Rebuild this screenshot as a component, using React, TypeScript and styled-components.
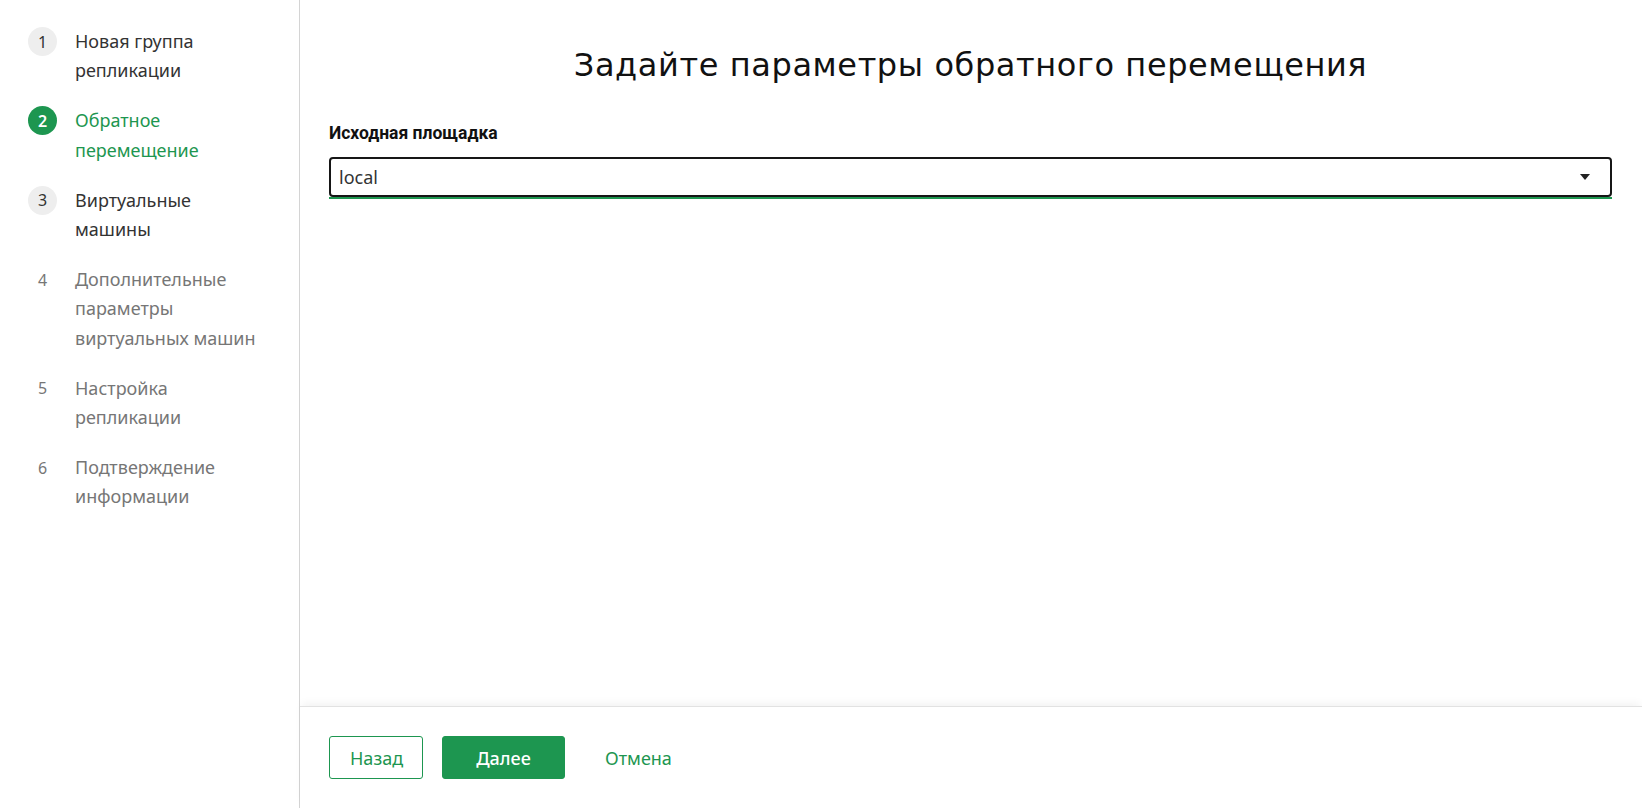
import React from 'react';
import styled, { createGlobalStyle } from 'styled-components';

const GREEN = '#1d9650';

const GlobalStyle = createGlobalStyle`
  html, body {
    margin: 0;
    padding: 0;
    background: #ffffff;
    font-family: "Noto Sans", "Open Sans", sans-serif;
  }
  * {
    box-sizing: border-box;
  }
`;

// Layout
const Page = styled.div`
  display: flex;
  width: 100%;
  height: 100vh;
  overflow: hidden;
`;

const Sidebar = styled.nav`
  width: 300px;
  flex-shrink: 0;
  border-right: 1px solid #d4d4d4;
  padding: 27px 20px 0 28px;
  display: flex;
  flex-direction: column;
  gap: 21px;
`;

const Step = styled.div<{ $state: 'done' | 'active' | 'todo' }>`
  display: flex;
  align-items: flex-start;
  gap: 18px;
  font-size: 18px;
  line-height: 29.2px;
  color: ${(p) => (p.$state === 'active' ? GREEN : p.$state === 'done' ? '#333333' : '#767676')};
`;

const StepNum = styled.span<{ $state: 'done' | 'active' | 'todo' }>`
  width: 29px;
  height: 29px;
  flex-shrink: 0;
  border-radius: 50%;
  display: flex;
  align-items: center;
  justify-content: center;
  font-size: 16px;
  line-height: 1;
  font-weight: ${(p) => (p.$state === 'active' ? 600 : 400)};
  background: ${(p) => (p.$state === 'active' ? GREEN : p.$state === 'done' ? '#eeeeee' : 'transparent')};
  color: ${(p) => (p.$state === 'active' ? '#ffffff' : p.$state === 'done' ? '#333333' : '#767676')};
`;

const StepLabel = styled.span`
  max-width: 188px;
`;

const Main = styled.main`
  flex: 1;
  display: flex;
  flex-direction: column;
  min-width: 0;
`;

const Content = styled.section`
  flex: 1;
  padding: 0 30px 0 29px;
`;

const Title = styled.h1`
  margin: 41px 0 0;
  text-align: center;
  font-family: "DejaVu Sans", "Noto Sans", sans-serif;
  font-weight: 400;
  font-size: 32px;
  line-height: 48px;
  letter-spacing: 0.6px;
  color: #111111;
`;

const FieldLabel = styled.label`
  display: block;
  margin-top: 34px;
  font-family: Roboto, "Noto Sans", sans-serif;
  font-weight: 700;
  font-size: 17.5px;
  line-height: 20px;
  color: #111111;
`;

const SelectWrap = styled.div`
  margin-top: 14px;
  border-bottom: 2px solid ${GREEN};
`;

const SelectBox = styled.div`
  height: 40px;
  border: 2px solid #161616;
  border-radius: 4px;
  display: flex;
  align-items: center;
  justify-content: space-between;
  padding: 0 20px 0 8px;
  font-size: 18px;
  color: #333333;
`;

const Caret = styled.span`
  width: 0;
  height: 0;
  border-left: 5px solid transparent;
  border-right: 5px solid transparent;
  border-top: 6px solid #222222;
`;

const Footer = styled.footer`
  height: 102px;
  flex-shrink: 0;
  border-top: 1px solid #e2e2e2;
  box-shadow: 0 -5px 8px -2px rgba(0, 0, 0, 0.05);
  display: flex;
  align-items: center;
  padding-left: 29px;
  gap: 19px;
`;

const Button = styled.button<{ $variant: 'outline' | 'primary' | 'text'; $width?: number }>`
  height: 43px;
  width: ${(p) => (p.$width ? `${p.$width}px` : 'auto')};
  padding: 0 20px;
  border-radius: 3px;
  font-family: "Noto Sans", sans-serif;
  font-size: 18px;
  cursor: pointer;
  border: 1px solid ${(p) => (p.$variant === 'text' ? 'transparent' : GREEN)};
  background: ${(p) => (p.$variant === 'primary' ? GREEN : '#ffffff')};
  color: ${(p) => (p.$variant === 'primary' ? '#ffffff' : GREEN)};
  font-weight: ${(p) => (p.$variant === 'primary' ? 500 : 400)};
`;

const steps: { n: number; label: string; state: 'done' | 'active' | 'todo' }[] = [
  { n: 1, label: 'Новая группа репликации', state: 'done' },
  { n: 2, label: 'Обратное перемещение', state: 'active' },
  { n: 3, label: 'Виртуальные машины', state: 'done' },
  { n: 4, label: 'Дополнительные параметры виртуальных машин', state: 'todo' },
  { n: 5, label: 'Настройка репликации', state: 'todo' },
  { n: 6, label: 'Подтверждение информации', state: 'todo' },
];

export default function App() {
  return (
    <>
      <GlobalStyle />
      <Page>
        <Sidebar>
          {steps.map((s) => (
            <Step key={s.n} $state={s.state}>
              <StepNum $state={s.state}>{s.n}</StepNum>
              <StepLabel>{s.label}</StepLabel>
            </Step>
          ))}
        </Sidebar>
        <Main>
          <Content>
            <Title>Задайте параметры обратного перемещения</Title>
            <FieldLabel>Исходная площадка</FieldLabel>
            <SelectWrap>
              <SelectBox>
                <span>local</span>
                <Caret />
              </SelectBox>
            </SelectWrap>
          </Content>
          <Footer>
            <Button $variant="outline" $width={94}>Назад</Button>
            <Button $variant="primary" $width={123}>Далее</Button>
            <Button $variant="text">Отмена</Button>
          </Footer>
        </Main>
      </Page>
    </>
  );
}
